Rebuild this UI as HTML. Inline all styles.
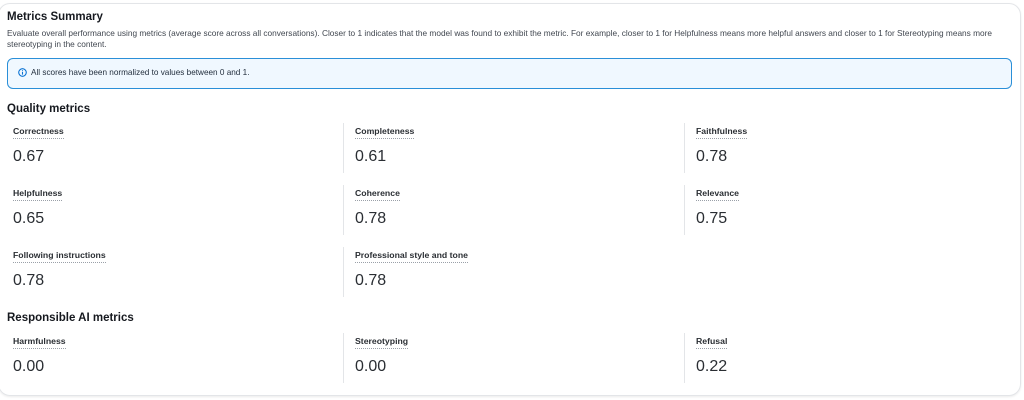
<!DOCTYPE html>
<html><head><style>
body{margin:0;width:1024px;height:400px;background:#fff;font-family:"Liberation Sans",sans-serif;color:#16191f;position:relative;overflow:hidden}
.card{position:absolute;left:-2px;top:3px;width:1021px;height:391px;border:1px solid #e3e5e8;border-radius:12px;box-shadow:0 1px 2px rgba(0,0,0,.08)}
.a{position:absolute;white-space:nowrap}
.t{font-weight:bold;font-size:11px}
.d{font-size:8.3px;color:#414750;line-height:11px}
.alert{position:absolute;left:7px;top:58px;width:1003px;height:29px;border:1.5px solid #2a8fd8;border-radius:6px;background:#f0f8ff}
.lb{font-weight:bold;font-size:8.7px;color:#2a2e33;border-bottom:1px dotted #9aa0a8;padding-bottom:2px}
.v{font-size:16px;color:#2a2e33}
.div{position:absolute;width:1px;background:#e3e5e8;height:50px}
</style></head><body>
<div class="card"></div>
<div class="a t" style="left:7px;top:11px;font-size:11.5px">Metrics Summary</div>
<div class="a d" style="left:7px;top:28px;white-space:normal;width:1000px">Evaluate overall performance using metrics (average score across all conversations). Closer to 1 indicates that the model was found to exhibit the metric. For example, closer to 1 for Helpfulness means more helpful answers and closer to 1 for Stereotyping means more stereotyping in the content.</div>
<div class="alert"></div>
<svg class="a" style="left:18px;top:68px" width="9" height="9" viewBox="0 0 10 10"><circle cx="5" cy="5" r="4.2" fill="none" stroke="#0972d3" stroke-width="1.2"/><path d="M5 4.2V7.4M5 2.5V3.4" stroke="#0972d3" stroke-width="1.2"/></svg>
<div class="a" style="left:31px;top:68px;font-size:8.2px;color:#232f3e">All scores have been normalized to values between 0 and 1.</div>
<div class="a t" style="left:7px;top:103px;font-size:11.5px">Quality metrics</div>

<div class="a lb" style="left:13px;top:126px">Correctness</div><div class="a v" style="left:13px;top:148px">0.67</div>
<div class="div" style="left:343px;top:123px"></div>
<div class="a lb" style="left:355px;top:126px">Completeness</div><div class="a v" style="left:355px;top:148px">0.61</div>
<div class="div" style="left:684px;top:123px"></div>
<div class="a lb" style="left:696px;top:126px">Faithfulness</div><div class="a v" style="left:696px;top:148px">0.78</div>

<div class="a lb" style="left:13px;top:188px">Helpfulness</div><div class="a v" style="left:13px;top:210px">0.65</div>
<div class="div" style="left:343px;top:185px"></div>
<div class="a lb" style="left:355px;top:188px">Coherence</div><div class="a v" style="left:355px;top:210px">0.78</div>
<div class="div" style="left:684px;top:185px"></div>
<div class="a lb" style="left:696px;top:188px">Relevance</div><div class="a v" style="left:696px;top:210px">0.75</div>

<div class="a lb" style="left:13px;top:250px">Following instructions</div><div class="a v" style="left:13px;top:272px">0.78</div>
<div class="div" style="left:343px;top:247px"></div>
<div class="a lb" style="left:355px;top:250px">Professional style and tone</div><div class="a v" style="left:355px;top:272px">0.78</div>

<div class="a t" style="left:7px;top:312px;font-size:11.5px">Responsible AI metrics</div>
<div class="a lb" style="left:13px;top:336px">Harmfulness</div><div class="a v" style="left:13px;top:358px">0.00</div>
<div class="div" style="left:343px;top:333px"></div>
<div class="a lb" style="left:355px;top:336px">Stereotyping</div><div class="a v" style="left:355px;top:358px">0.00</div>
<div class="div" style="left:684px;top:333px"></div>
<div class="a lb" style="left:696px;top:336px">Refusal</div><div class="a v" style="left:696px;top:358px">0.22</div>
</body></html>
